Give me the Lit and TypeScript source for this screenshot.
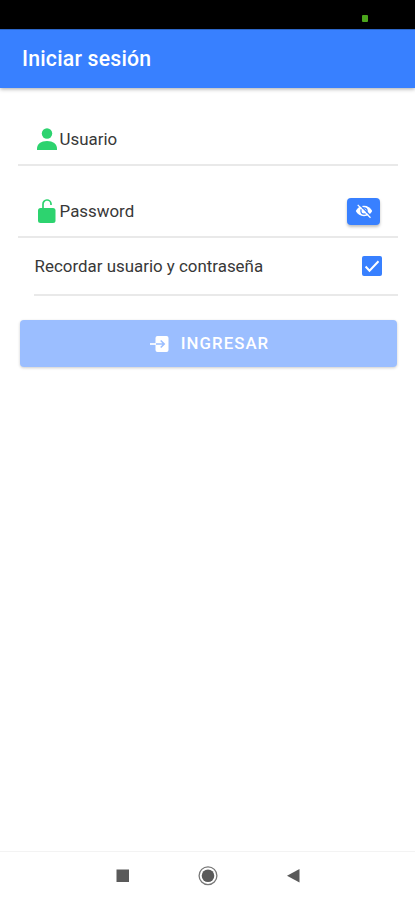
import { LitElement, html, css } from "lit";
import { customElement, property } from "lit/decorators.js";

@customElement("login-row")
class LoginRow extends LitElement {
  @property() label = "";

  static styles = css`
    :host {
      display: flex;
      align-items: center;
      box-sizing: border-box;
      border-bottom: 2px solid #e9e9e9;
      color: #383838;
      font-size: 16.9px;
    }
    .label {
      flex: 1;
      padding-left: 0.6px;
      white-space: nowrap;
    }
  `;

  render() {
    return html`<slot name="start"></slot><span class="label">${this.label}</span><slot name="end"></slot>`;
  }
}

@customElement("app-root")
class AppRoot extends LitElement {
  static styles = css`
    :host {
      display: flex;
      flex-direction: column;
      height: 900px;
      background: #fff;
      font-family: Roboto, sans-serif;
      overflow: hidden;
    }
    svg {
      display: block;
    }
    .status {
      height: 29px;
      box-sizing: border-box;
      background: #000;
      display: flex;
      justify-content: flex-end;
      padding: 15px 47px 0 0;
    }
    .dot {
      width: 6px;
      height: 7px;
      border-radius: 1px;
      background: #4ba51c;
    }
    header {
      height: 59px;
      box-sizing: border-box;
      padding: 0 0 2px 22px;
      display: flex;
      align-items: center;
      background: #3880ff;
      border-top: 1px solid #2c66c8;
      color: #fff;
      font-size: 21.2px;
      font-weight: 500;
      letter-spacing: 0.22px;
      box-shadow: 0 1px 4px rgba(0, 0, 0, 0.35);
    }
    main {
      flex: 1;
      padding: 26px 17px 0 18px;
    }
    .user {
      height: 52px;
      padding-left: 18px;
    }
    .pass {
      height: 52px;
      margin-top: 20px;
      padding: 0 18px;
    }
    .remember {
      height: 58px;
      margin-left: 16px;
      padding: 0 16px 0 0;
    }
    .lead {
      width: 22px;
      height: 24px;
      margin-right: 1px;
    }
    .eye {
      width: 33px;
      height: 27px;
      padding: 0;
      border: 0;
      border-radius: 4px;
      background: #3880ff;
      display: flex;
      align-items: center;
      justify-content: center;
      box-shadow: 0 2px 3px rgba(0, 0, 0, 0.25);
    }
    .check {
      width: 20px;
      height: 20px;
      border-radius: 2px;
      background: #3880ff;
    }
    .enter {
      width: 377px;
      height: 47px;
      margin: 24px 0 0 2px;
      padding: 0 0 0 1px;
      border: 0;
      border-radius: 4px;
      background: #9bbeff;
      color: #fff;
      font: 500 16.8px Roboto, sans-serif;
      letter-spacing: 1.05px;
      display: flex;
      align-items: center;
      justify-content: center;
      gap: 12px;
      box-shadow: 0 1px 3px rgba(0, 0, 0, 0.2);
    }
    .enter span {
      margin-right: -1px;
      padding-bottom: 2px;
    }
    nav {
      height: 49px;
      box-sizing: border-box;
      border-top: 1px solid #f3f3f3;
      display: flex;
      align-items: center;
      justify-content: center;
      gap: 66px;
    }
  `;

  render() {
    return html`
      <div class="status"><div class="dot"></div></div>
      <header>Iniciar sesión</header>
      <main>
        <login-row class="user" label="Usuario">
          <svg slot="start" class="lead" viewBox="0 0 22 24" fill="#2dd36f">
            <circle cx="11" cy="6.500" r="5.200" />
            <path d="M1 23v-1.500C1 17 5 14 11 14S21 17 21 21.500V23z" />
          </svg>
        </login-row>
        <login-row class="pass" label="Password">
          <svg slot="start" class="lead" viewBox="0 0 22 24">
            <rect x="2" y="9" width="17.500" height="15" rx="2.500" fill="#2dd36f" />
            <path d="M7 9.500V5.200a4 4 0 0 1 8-.4V6" fill="none" stroke="#2dd36f" stroke-width="1.700" />
          </svg>
          <button slot="end" class="eye" aria-label="Mostrar">
            <svg width="18" height="16" viewBox="0 0 18 16">
              <path d="M.8 8C2.500 4.800 5.400 2.800 9 2.800s6.500 2 8.200 5.200c-1.700 3.200-4.600 5.200-8.200 5.200S2.500 11.200.8 8z" fill="#fff" />
              <circle cx="9" cy="8" r="3.100" fill="none" stroke="#3880ff" stroke-width="1.200" />
              <path d="M3.600 .8 16 13.200" stroke="#3880ff" stroke-width="1.500" />
              <path d="M2.700 1.900 15.500 14.700" stroke="#fff" stroke-width="1.300" />
            </svg>
          </button>
        </login-row>
        <login-row class="remember" label="Recordar usuario y contraseña">
          <svg slot="end" class="check" viewBox="0 0 20 20">
            <path d="M3.600 10.500 7.500 14.700 16.500 5.200" fill="none" stroke="#fff" stroke-width="2" />
          </svg>
        </login-row>
        <button class="enter">
          <svg width="19" height="18" viewBox="0 0 19 18">
            <rect x="5.500" y="1" width="13" height="16" rx="2" fill="#fff" />
            <path d="M0 9H6" stroke="#fff" stroke-width="1.700" />
            <path d="M6 9H14M10.700 5.500 14.200 9 10.700 12.500" fill="none" stroke="#9bbeff" stroke-width="1.600" />
          </svg>
          <span>INGRESAR</span>
        </button>
      </main>
      <nav>
        <svg width="20" height="20" viewBox="0 0 20 20"><rect x="4.500" y="3.500" width="12.500" height="12.500" fill="#5a5a5a" /></svg>
        <svg width="20" height="20" viewBox="0 0 20 20">
          <circle cx="10" cy="9.700" r="8.900" fill="none" stroke="#777" stroke-width="1.300" />
          <circle cx="10" cy="9.700" r="6.300" fill="#5a5a5a" />
        </svg>
        <svg width="20" height="20" viewBox="0 0 20 20"><path d="M3 9.700 15.500 3v13.500z" fill="#5a5a5a" /></svg>
      </nav>
    `;
  }
}
